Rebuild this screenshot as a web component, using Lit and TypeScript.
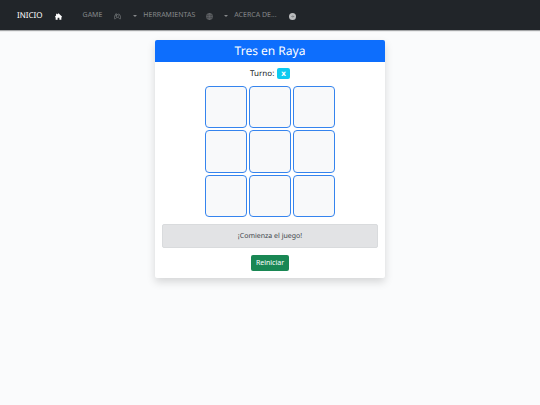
import { LitElement, html, css } from "lit";
import { customElement, state } from "lit/decorators.js";

const LINES = [
  [0, 1, 2], [3, 4, 5], [6, 7, 8],
  [0, 3, 6], [1, 4, 7], [2, 5, 8],
  [0, 4, 8], [2, 4, 6],
];

const homeIcon = html`<svg class="icon" viewBox="0 0 16 16" aria-hidden="true">
  <path fill="currentColor" d="M8 .8 15.800 8v1.500H14.500V15.500H10v-4.500H6v4.500H1.500V9.500H.2V8L2.500 5.800V1.800h2.500v1.700z" />
</svg>`;

const gamepadIcon = html`<svg class="icon" viewBox="0 0 16 16" aria-hidden="true">
  <g fill="none" stroke="currentColor" stroke-width="1.4" stroke-linejoin="round" stroke-linecap="round">
    <path d="M4.600 2.500h2l.6 1h1.600l.6-1h2c1.900 0 3.900 6 3.900 9 0 3-2.100 3-3.400.7-.8-1.400-1.500-2-3.900-2s-3.100.6-3.900 2c-1.300 2.300-3.400 2.300-3.400-.7 0-3 2-9 3.900-9z" />
    <path d="M5.400 5.200v2.600M4.100 6.500h2.600M10 7.500h.1M11.400 5.700h.1" />
  </g>
</svg>`;

const globeIcon = html`<svg class="icon" viewBox="0 0 16 16" aria-hidden="true">
  <g fill="none" stroke="currentColor" stroke-width="1">
    <circle cx="8" cy="8" r="7.300" />
    <ellipse cx="8" cy="8" rx="3.500" ry="7.300" />
    <path d="M8 .7v14.600M.7 8h14.600M2 4.500h12M2 11.500h12" />
  </g>
</svg>`;

const arrowIcon = html`<svg class="icon" viewBox="0 0 16 16" aria-hidden="true">
  <circle cx="8" cy="8" r="8" fill="currentColor" />
  <path d="M5 8h6M8.500 5.500 11 8l-2.500 2.500" fill="none" stroke="#5c6063" stroke-width="1.200" />
</svg>`;

@customElement("app-navbar")
export class AppNavbar extends LitElement {
  static styles = css`
    :host { display: block; }
    .bar {
      box-sizing: border-box;
      display: flex;
      align-items: center;
      height: 30px;
      padding: 2px 17px 0;
      background: #212529;
      box-shadow: 0 1px 1px rgba(33, 37, 41, 0.4);
    }
    a {
      display: flex;
      align-items: center;
      gap: 12px;
      color: #85888a;
      font-size: 7px;
      line-height: 12px;
      text-decoration: none;
      white-space: nowrap;
    }
    .brand { margin-right: 21px; color: #fff; font-size: 8px; }
    .toggle { margin-right: 6px; }
    .toggle::after {
      content: "";
      border: 2px solid transparent;
      border-top-color: currentColor;
      border-bottom: 0;
    }
    .tools { gap: 11px; }
    .icon { display: block; width: 7px; height: 7px; }
    .bright { color: #babcbd; }
  `;

  render() {
    return html`
      <nav class="bar">
        <a class="brand" href="#inicio">INICIO ${homeIcon}</a>
        <a class="toggle" href="#game">GAME ${gamepadIcon}</a>
        <a class="toggle tools" href="#herramientas">HERRAMIENTAS ${globeIcon}</a>
        <a href="#acerca">ACERCA DE... <span class="bright">${arrowIcon}</span></a>
      </nav>
    `;
  }
}

@customElement("tic-tac-toe")
export class TicTacToe extends LitElement {
  @state() private cells: string[] = Array(9).fill("");
  @state() private turn = "x";

  static styles = css`
    :host { display: block; }
    .card {
      background: #fff;
      border-radius: 2px;
      box-shadow: 0 4px 8px rgba(0, 0, 0, 0.15);
      text-align: center;
    }
    .title {
      margin: 0;
      background: #0d6efd;
      color: #fff;
      border-radius: 2px 2px 0 0;
      font-size: 12px;
      font-weight: 400;
      line-height: 22px;
    }
    .body {
      display: flex;
      flex-direction: column;
      align-items: center;
      padding: 6px 7px 7px;
      gap: 7px;
    }
    .turn {
      display: flex;
      align-items: center;
      gap: 3px;
      font-size: 8px;
      line-height: 11px;
    }
    .badge {
      padding: 0 4px;
      background: #0dcaf0;
      color: #fff;
      border-radius: 2px;
      font-weight: 700;
    }
    .board {
      display: grid;
      grid-template-columns: repeat(3, 1fr);
      gap: 2px;
      width: 131px;
    }
    .cell {
      aspect-ratio: 1;
      min-width: 0;
      padding: 0;
      border: 1px solid #3584ee;
      border-radius: 4px;
      background: #f8f9fa;
      color: #0d6efd;
      font: inherit;
      font-size: 20px;
      line-height: 1;
    }
    .message {
      box-sizing: border-box;
      align-self: stretch;
      padding: 7px 6px 5px;
      border: 1px solid #d9dbdd;
      border-radius: 2px;
      background: #e2e3e5;
      color: #41464b;
      font-size: 7px;
      line-height: 10px;
    }
    .reset {
      padding: 3px 5px;
      border: 0;
      border-radius: 2px;
      background: #198754;
      color: #fff;
      font: inherit;
      font-size: 7px;
      line-height: 10px;
    }
  `;

  private get winner() {
    const line = LINES.find(([a, b, c]) => this.cells[a] && this.cells[a] === this.cells[b] && this.cells[a] === this.cells[c]);
    return line ? this.cells[line[0]] : "";
  }

  private get message() {
    if (this.winner) return `¡Gana ${this.winner}!`;
    return this.cells.every(Boolean) ? "¡Empate!" : "¡Comienza el juego!";
  }

  private play(index: number) {
    if (this.cells[index] || this.winner) return;
    this.cells = this.cells.map((value, i) => (i === index ? this.turn : value));
    this.turn = this.turn === "x" ? "o" : "x";
  }

  private reset() {
    this.cells = Array(9).fill("");
    this.turn = "x";
  }

  render() {
    return html`
      <section class="card">
        <h1 class="title">Tres en Raya</h1>
        <div class="body">
          <div class="turn">Turno: <span class="badge">${this.turn}</span></div>
          <div class="board">
            ${this.cells.map(
              (value, i) => html`<button class="cell" aria-label="Casilla ${i + 1}" @click=${() => this.play(i)}>${value}</button>`
            )}
          </div>
          <div class="message" role="status">${this.message}</div>
          <button class="reset" @click=${this.reset}>Reiniciar</button>
        </div>
      </section>
    `;
  }
}

@customElement("app-root")
export class AppRoot extends LitElement {
  static styles = css`
    :host {
      display: block;
      min-height: 100vh;
      background: #fafbfc;
      color: #212529;
      font-family: "Noto Sans", "Liberation Sans", sans-serif;
      text-rendering: geometricPrecision;
    }
    .content { display: flex; justify-content: center; padding: 10px; }
    .game { flex: 0 1 230px; }
  `;

  render() {
    return html`
      <app-navbar></app-navbar>
      <main class="content"><tic-tac-toe class="game"></tic-tac-toe></main>
    `;
  }
}
